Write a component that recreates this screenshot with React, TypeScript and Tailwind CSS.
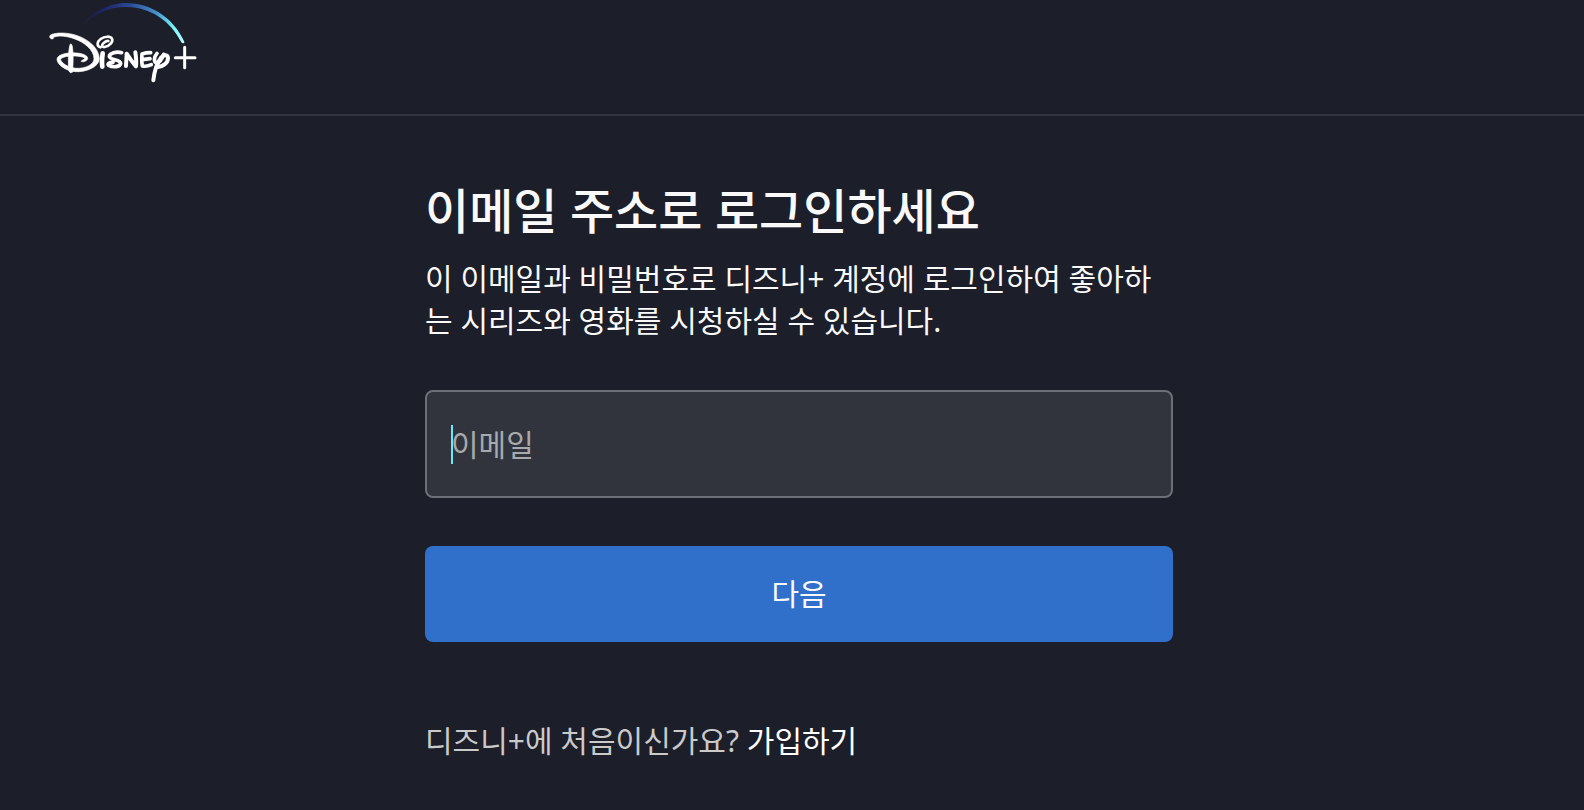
import { FormEvent, useState } from "react"

function DisneyLogo() {
  return (
    <svg viewBox="24 0 450 255" className="h-[85px] w-[150px]" fill="none" aria-hidden="true">
      <defs>
        <linearGradient id="arc" x1="118" y1="85" x2="432" y2="128" gradientUnits="userSpaceOnUse">
          <stop offset="0" stopColor="#1c1e29" />
          <stop offset="0.2" stopColor="#1e2466" />
          <stop offset="0.45" stopColor="#2b4b97" />
          <stop offset="0.7" stopColor="#4590cb" />
          <stop offset="0.88" stopColor="#72f3fa" />
          <stop offset="1" stopColor="#b4ffff" />
        </linearGradient>
      </defs>

      {/* Arc over the wordmark */}
      <path
        d="M119 86C152 38 203 9 258 9C335 9 402 56 433 125C434 130 427 132 424 127C392 63 331 22 261 21C207 20 157 42 122 86Z"
        fill="url(#arc)"
      />

      {/* D */}
      <path
        d="M38 117C29 117 26 108 33 104C50 97 84 97 112 107C147 119 178 146 178 177C177 200 139 217 107 215C75 213 50 192 51 177C53 162 88 155 118 160C138 163 148 173 141 180C136 185 127 187 123 184C124 181 134 179 134 175C133 171 117 168 99 168C80 168 64 172 62 178C62 186 81 203 108 205C136 206 162 194 162 176C162 150 133 126 102 116C80 108 57 106 43 111C37 112 43 114 38 117Z"
        fill="#fff"
        stroke="#fff"
        strokeWidth="2"
      />
      <path
        d="M91 132C97 130 98 144 99 160C100 181 99 202 97 217C93 220 87 217 86 210C84 188 85 145 91 132Z"
        fill="#fff"
        stroke="#fff"
        strokeWidth="2"
      />

      <g stroke="#fff" strokeLinecap="round" strokeLinejoin="round">
        {/* i */}
        <path d="M181 142C169 138 171 125 182 117C194 108 211 108 216 116C220 125 209 139 194 141C185 142 183 136 191 129C197 124 202 122 205 123" strokeWidth="8" />
        <path d="M188 160C186 175 185 188 187 200" strokeWidth="14" />
        {/* s */}
        <path d="M245 158C229 154 209 159 208 169C209 180 242 178 242 190C240 201 219 203 206 196C201 193 207 186 219 187" strokeWidth="11" />
        {/* n */}
        <path d="M258 198L260 161C269 174 278 188 288 199C290 185 288 170 286 157" strokeWidth="12" />
        {/* e */}
        <path d="M332 158C321 158 312 160 306 162C305 177 305 188 307 198C317 200 326 198 334 194M307 179L330 176" strokeWidth="11" />
        {/* y */}
        <path d="M351 160C342 171 340 186 350 189C361 191 367 174 371 163" strokeWidth="11" />
        <path d="M354 201C367 200 384 190 384 175C384 163 372 163 363 173C350 189 343 215 340 241" strokeWidth="12" />
        {/* + */}
        <path d="M406 173H465M434 142V203" strokeWidth="9" />
      </g>
    </svg>
  )
}

export default function App() {
  const [email, setEmail] = useState("")

  const handleSubmit = (e: FormEvent) => {
    e.preventDefault()
  }

  return (
    <div className="flex min-h-screen flex-col bg-[#1c1e29] font-['Noto_Sans','Noto_Sans_CJK_KR',sans-serif] text-[30px] leading-[42px] text-[#f9f9f9]">
      <header className="h-[116px] border-b-2 border-[#31343e] px-12">
        <a href="#" aria-label="Disney+" className="inline-block">
          <DisneyLogo />
        </a>
      </header>

      <main className="flex flex-1 justify-center pt-[66px] pl-[14px]">
        <div className="w-full max-w-[748px]">
          <h1 className="mb-[18px] text-5xl leading-[58px] font-medium">이메일 주소로 로그인하세요</h1>
          <p className="mb-12 break-all">
            이 이메일과 비밀번호로 디즈니+ 계정에 로그인하여 좋아하는 시리즈와 영화를 시청하실 수 있습니다.
          </p>

          <form onSubmit={handleSubmit}>
            <div className="relative mb-12">
              <input
                type="email"
                aria-label="이메일"
                placeholder="이메일"
                value={email}
                onChange={(e) => setEmail(e.target.value)}
                className="block h-[108px] w-full rounded-lg border-2 border-[#6d6f78] bg-[#31343c] px-6 placeholder:text-[#a8a9ad] focus:outline-none"
              />
              {/* Text cursor */}
              {!email && <span className="absolute top-[35px] left-[26px] h-[39px] w-0.5 bg-[#6be7f5]" />}
            </div>
            <button type="submit" className="h-24 w-full rounded-lg bg-[#3070cb]">
              다음
            </button>
          </form>

          <p className="mt-[78px] text-[#cacaca]">
            디즈니+에 처음이신가요?{" "}
            <a href="#" className="text-white">가입하기</a>
          </p>
        </div>
      </main>
    </div>
  )
}
